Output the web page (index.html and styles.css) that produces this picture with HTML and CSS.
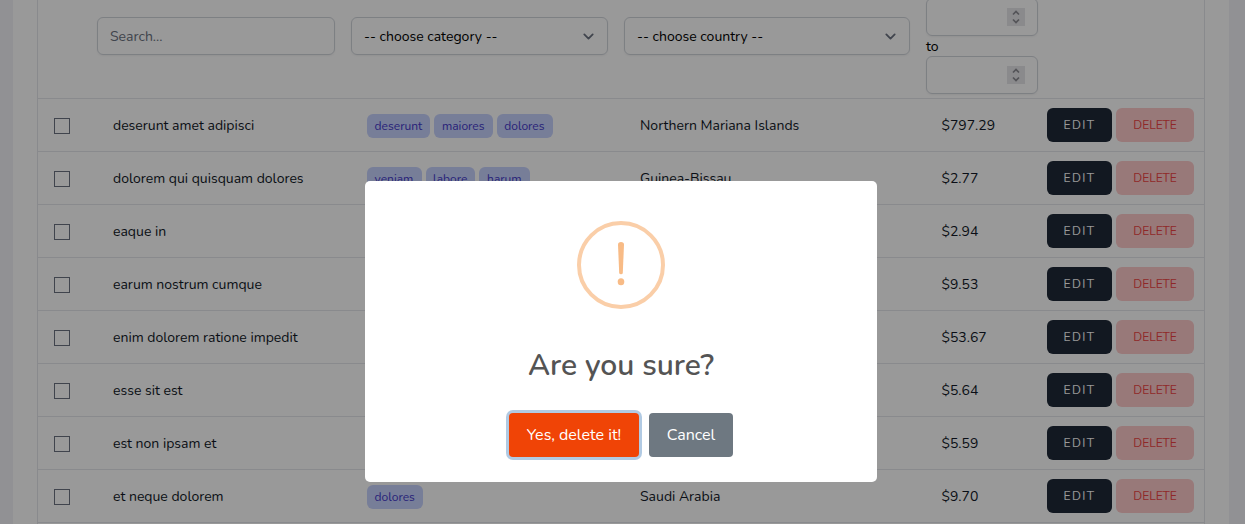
FILE: index.html
```html
<!DOCTYPE html>
<html lang="en">
<head>
<meta charset="utf-8">
<title>Products</title>
<link rel="stylesheet" href="styles.css">
</head>
<body>
<main class="panel">
  <div class="table">
    <div class="row filters">
      <div></div>
      <div class="field search">Search...</div>
      <div class="field select"><span>-- choose category --</span><svg class="chevron" viewBox="0 0 20 20"><path d="M6 8l4 4 4-4"/></svg></div>
      <div class="field select"><span>-- choose country --</span><svg class="chevron" viewBox="0 0 20 20"><path d="M6 8l4 4 4-4"/></svg></div>
      <div class="range">
        <div class="field number"><svg class="spinner" viewBox="0 0 18 18"><path d="M6 6.5l3-3 3 3M6 11.5l3 3 3-3"/></svg></div>
        <div class="to">to</div>
        <div class="field number"><svg class="spinner" viewBox="0 0 18 18"><path d="M6 6.5l3-3 3 3M6 11.5l3 3 3-3"/></svg></div>
      </div>
      <div></div>
    </div>
    <div class="row"><i class="check"></i><span class="name">deserunt amet adipisci</span><div class="tags"><span>deserunt</span><span>maiores</span><span>dolores</span></div><span class="country">Northern Mariana Islands</span><span class="price">$797.29</span><div class="actions"><b class="edit">EDIT</b><b class="delete">DELETE</b></div></div>
    <div class="row"><i class="check"></i><span class="name">dolorem qui quisquam dolores</span><div class="tags"><span>veniam</span><span>labore</span><span>harum</span></div><span class="country">Guinea-Bissau</span><span class="price">$2.77</span><div class="actions"><b class="edit">EDIT</b><b class="delete">DELETE</b></div></div>
    <div class="row"><i class="check"></i><span class="name">eaque in</span><div></div><span></span><span class="price">$2.94</span><div class="actions"><b class="edit">EDIT</b><b class="delete">DELETE</b></div></div>
    <div class="row"><i class="check"></i><span class="name">earum nostrum cumque</span><div></div><span></span><span class="price">$9.53</span><div class="actions"><b class="edit">EDIT</b><b class="delete">DELETE</b></div></div>
    <div class="row"><i class="check"></i><span class="name">enim dolorem ratione impedit</span><div></div><span></span><span class="price">$53.67</span><div class="actions"><b class="edit">EDIT</b><b class="delete">DELETE</b></div></div>
    <div class="row"><i class="check"></i><span class="name">esse sit est</span><div></div><span></span><span class="price">$5.64</span><div class="actions"><b class="edit">EDIT</b><b class="delete">DELETE</b></div></div>
    <div class="row"><i class="check"></i><span class="name">est non ipsam et</span><div></div><span></span><span class="price">$5.59</span><div class="actions"><b class="edit">EDIT</b><b class="delete">DELETE</b></div></div>
    <div class="row"><i class="check"></i><span class="name">et neque dolorem</span><div class="tags"><span>dolores</span></div><span class="country">Saudi Arabia</span><span class="price">$9.70</span><div class="actions"><b class="edit">EDIT</b><b class="delete">DELETE</b></div></div>
  </div>
</main>
<div class="overlay">
  <section class="modal" role="dialog">
    <svg class="warning" viewBox="0 0 88 88"><circle cx="44" cy="44" r="42"/><path d="M41 23.5Q41 21 44 21T47 23.5L45.8 52Q45.6 53.2 44 53.2T42.2 52Z"/><ellipse cx="44" cy="60.7" rx="3.3" ry="3.5"/></svg>
    <h2>Are you sure?</h2>
    <div class="modal-actions"><button class="confirm">Yes, delete it!</button><button class="cancel">Cancel</button></div>
  </section>
</div>
</body>
</html>
```
FILE: styles.css
```css
* { box-sizing: border-box; }
body { margin: 0; height: 524px; overflow: hidden; background: #f2f2f7; font-family: Nunito, Lato, sans-serif; font-size: 14px; line-height: 20px; color: #111827; }
.panel { height: 524px; margin: 0 16px 0 13px; padding: 0 24px; background: #fff; overflow: hidden; }
.table { width: 1168px; height: 540px; border: solid #e5e7eb; border-width: 0 1px; }
.row { display: grid; grid-template-columns: 59px 254px 273px 302px 121px 1fr; align-items: center; height: 53px; border-bottom: 1px solid #e5e7eb; }
.filters { height: 99px; align-items: start; color: #000; }
.field { height: 38px; border: 1px solid #d1d5db; border-radius: 6px; box-shadow: 0 1px 2px rgba(0,0,0,.05); padding: 1px 12px 0; display: flex; align-items: center; justify-content: space-between; margin: 17px 16px 0 0; }
.search { color: #6b7280; }
.select { padding-right: 8px; }
.chevron { width: 21px; height: 21px; fill: none; stroke: #6b7280; stroke-width: 1.7; stroke-linecap: round; stroke-linejoin: round; }
.range { margin-top: -2px; width: 112px; }
.number { margin: 0; padding-top: 0; justify-content: flex-end; }
.spinner { width: 18px; height: 18px; background: #e6e6ea; fill: none; stroke: #8b8b92; stroke-width: 1.7; }
.to { height: 20px; padding-top: 1px; }
.check { width: 16px; height: 16px; margin: 2px 0 0 16px; border: 1px solid #6b7280; }
.name, .country { padding: 2px 0 0 16px; }
.price { padding: 1px 0 0 15.5px; }
.tags { display: flex; gap: 4px; padding: 2px 0 0 16px; }
.tags span { height: 24px; padding: 0 8.2px 0 7.6px; border-radius: 6px; background: #c7d2fe; color: #4338ca; font-size: 12px; line-height: 24px; }
.actions { display: flex; gap: 4px; }
.actions b { height: 34px; border-radius: 6px; font-size: 12px; font-weight: 400; line-height: 34px; text-align: center; }
.edit { width: 65px; background: #1f2937; color: #fff; letter-spacing: 1.4px; }
.delete { width: 78px; background: #fecaca; color: #ef4444; }
.overlay { position: absolute; inset: 0; display: flex; background: rgba(0,0,0,.4); }
.modal { width: 512px; height: 301px; margin: 181px 0 0 365px; padding-top: 40px; border-radius: 5px; background: #fff; display: flex; flex-direction: column; align-items: center; color: #545454; }
.warning { width: 88px; height: 88px; fill: #f8bb86; }
.warning circle { fill: none; stroke: #facea8; stroke-width: 4; }
h2 { margin: 39px 0 0; font-size: 30px; line-height: 36px; font-weight: 600; }
.modal-actions { display: flex; gap: 10px; margin-top: 29px; }
button { height: 44px; padding: 0; border: 0; border-radius: 4px; color: #fff; font-family: inherit; font-size: 16px; }
.confirm { width: 130px; background: #f04406; box-shadow: 0 0 0 3px rgba(100,150,200,.5); }
.cancel { width: 84px; background: #6e7881; }
```
